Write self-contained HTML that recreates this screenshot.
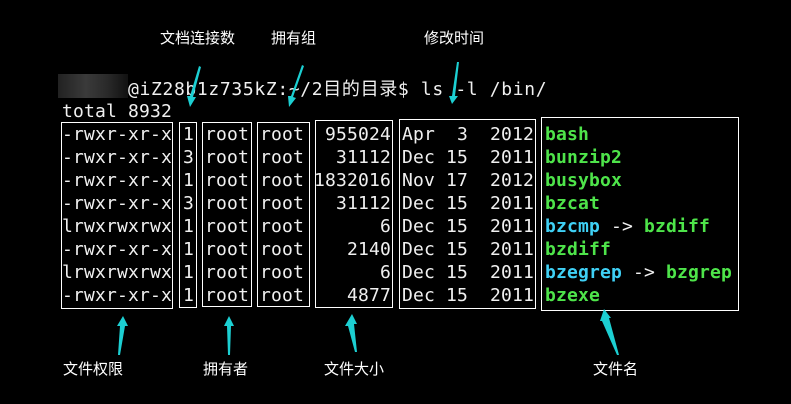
<!DOCTYPE html>
<html><head><meta charset="utf-8"><style>
html,body{margin:0;padding:0;background:#000;width:791px;height:404px;overflow:hidden;position:relative}
.m{position:absolute;font-family:"DejaVu Sans Mono","Liberation Mono",monospace;font-size:18px;letter-spacing:0.16px;line-height:23px;color:#f0f0f0;white-space:pre;margin:0}
.b{position:absolute;border:1px solid #fff;box-sizing:border-box}
.l{position:absolute;font-family:"Liberation Sans","Noto Sans CJK SC",sans-serif;font-size:15px;line-height:18px;color:#fff;white-space:nowrap}
.g{color:#4ee44a;font-weight:bold}
.c{color:#3fd0f5;font-weight:bold}
</style></head><body>
<div style="position:absolute;left:58px;top:74px;width:70px;height:24px;background:linear-gradient(90deg,#222,#3a3a3a 40%,#2a2a2a 70%,#111)"></div>
<div class="m" style="left:128px;top:77px;letter-spacing:0.65px">@iZ28b1z735kZ:~/2<span style="font-family:'Noto Sans CJK SC',sans-serif;font-size:18px">目的目录</span>$ ls -l /bin/</div>
<div class="m" style="left:62px;top:100px">total 8932</div>
<div class="m" style="left:62px;top:123px">-rwxr-xr-x
-rwxr-xr-x
-rwxr-xr-x
-rwxr-xr-x
lrwxrwxrwx
-rwxr-xr-x
lrwxrwxrwx
-rwxr-xr-x</div>
<div class="m" style="left:183px;top:123px">1
3
1
3
1
1
1
1</div>
<div class="m" style="left:205px;top:123px">root
root
root
root
root
root
root
root</div>
<div class="m" style="left:260px;top:123px">root
root
root
root
root
root
root
root</div>
<div class="m" style="left:314px;top:123px;width:77px;text-align:right">955024
31112
1832016
31112
6
2140
6
4877</div>
<div class="m" style="left:402px;top:123px">Apr  3  2012
Dec 15  2011
Nov 17  2012
Dec 15  2011
Dec 15  2011
Dec 15  2011
Dec 15  2011
Dec 15  2011</div>
<div class="m" style="left:545px;top:123px"><span class="g">bash</span>
<span class="g">bunzip2</span>
<span class="g">busybox</span>
<span class="g">bzcat</span>
<span class="c">bzcmp</span> -&gt; <span class="g">bzdiff</span>
<span class="g">bzdiff</span>
<span class="c">bzegrep</span> -&gt; <span class="g">bzgrep</span>
<span class="g">bzexe</span></div>
<div class="b" style="left:61px;top:122px;width:112px;height:187px"></div>
<div class="b" style="left:179px;top:122px;width:18px;height:186px"></div>
<div class="b" style="left:202px;top:122px;width:50px;height:185px"></div>
<div class="b" style="left:257px;top:122px;width:53px;height:185px"></div>
<div class="b" style="left:315px;top:120px;width:78px;height:188px"></div>
<div class="b" style="left:399px;top:119px;width:137px;height:190px"></div>
<div class="b" style="left:541px;top:117px;width:198px;height:194px"></div>
<div class="l" style="left:160px;top:30px">文档连接数</div>
<div class="l" style="left:271px;top:30px">拥有组</div>
<div class="l" style="left:424px;top:30px">修改时间</div>
<div class="l" style="left:63px;top:361px">文件权限</div>
<div class="l" style="left:203px;top:361px">拥有者</div>
<div class="l" style="left:324px;top:361px">文件大小</div>
<div class="l" style="left:593px;top:361px">文件名</div>
<svg width="791" height="404" style="position:absolute;left:0;top:0" fill="#1ccfd2">
<polygon points="199,66 201,67 193,97 196,97 190,107 187,96 190,96"/>
<polygon points="302,65 304,66 293,97 296,98 289,107 288,96 291,96"/>
<polygon points="457,62 459,62 455,96 458,96 452,104 449,96 452,96"/>
<polygon points="120,355 118,355 120,326 117,326 123,316 128,326 125,326"/>
<polygon points="228,355 230,355 231,326 234,326 229,316 224,326 227,326"/>
<polygon points="357,352 355,352 348,326 345,326 352,314 357,324 354,324"/>
<polygon points="619,355 617,355 602,321 600,321 604,309 611,318 609,318"/>
</svg>
</body></html>
